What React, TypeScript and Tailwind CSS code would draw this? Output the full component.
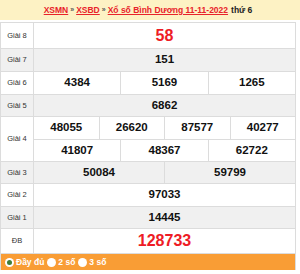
import React from 'react';

type Row = { label: string; nums: string[][]; big?: boolean; gray?: boolean; h: string[] };

const rows: Row[] = [
  { label: 'Giải 8', nums: [['58']], big: true, h: ['h-[25px]'] },
  { label: 'Giải 7', nums: [['151']], gray: true, h: ['h-[22px]'] },
  { label: 'Giải 6', nums: [['4384', '5169', '1265']], h: ['h-[22px]'] },
  { label: 'Giải 5', nums: [['6862']], gray: true, h: ['h-[21px]'] },
  {
    label: 'Giải 4',
    nums: [
      ['48055', '26620', '87577', '40277'],
      ['41807', '48367', '62722'],
    ],
    h: ['h-[22px]', 'h-[22px]'],
  },
  { label: 'Giải 3', nums: [['50084', '59799']], gray: true, h: ['h-[21px]'] },
  { label: 'Giải 2', nums: [['97033']], h: ['h-[22px]'] },
  { label: 'Giải 1', nums: [['14445']], gray: true, h: ['h-[21px]'] },
  { label: 'ĐB', nums: [['128733']], big: true, h: ['h-[24px]'] },
];

function Radio({ checked, label }: { checked?: boolean; label: string }) {
  return (
    <div className="flex items-center gap-[2px]">
      <span className="w-[9px] h-[9px] rounded-full bg-white flex items-center justify-center">
        {checked && <span className="w-[5px] h-[5px] rounded-full bg-[#3f7d3a]" />}
      </span>
      <span className="text-[8.5px] font-bold text-white">{label}</span>
    </div>
  );
}

export default function App() {
  return (
    <div className="w-[300px] h-[274px] bg-white font-['Liberation_Sans',Arial,sans-serif]">
      <div className="h-[20px] bg-[#fdf2c4] flex items-center justify-center text-[8.5px] font-bold pr-[4px]">
        <a className="text-[#e8232a] underline">XSMN</a>
        <span className="text-[#555] mx-[2px] text-[7px]">»</span>
        <a className="text-[#e8232a] underline">XSBD</a>
        <span className="text-[#555] mx-[2px] text-[7px]">»</span>
        <a className="text-[#e8232a] underline">Xổ số Bình Dương 11-11-2022</a>
        <span className="text-[#222] ml-[3px]">thứ 6</span>
      </div>
      <div className="mt-[2px] w-[296px] border-t border-l border-r border-[#dcdcdc]">
        {rows.map((r) => (
          <div
            key={r.label}
            className={`flex border-b border-[#dcdcdc] ${r.gray ? 'bg-[#f0f0f0]' : 'bg-white'}`}
          >
            <div className="w-[33px] shrink-0 border-r border-[#dcdcdc] flex items-center justify-center text-[7.5px] text-[#333]">
              {r.label}
            </div>
            <div className="flex-1 flex flex-col">
              {r.nums.map((line, i) => (
                <div
                  key={i}
                  className={`flex ${i > 0 ? 'border-t border-[#dcdcdc]' : ''} ${r.h[i]}`}
                >
                  {line.map((n, j) => (
                    <div
                      key={n}
                      className={`flex-1 flex items-center justify-center font-bold ${
                        j > 0 ? 'border-l border-[#dcdcdc]' : ''
                      } ${r.big ? 'text-[16px] text-[#ee1c25]' : 'text-[11.5px] text-[#111]'}`}
                    >
                      {n}
                    </div>
                  ))}
                </div>
              ))}
            </div>
          </div>
        ))}
        <div className="h-[16px] bg-[#f99d35] flex items-center gap-[3px] pl-[4px]">
          <Radio checked label="Đầy đủ" />
          <Radio label="2 số" />
          <Radio label="3 số" />
        </div>
      </div>
    </div>
  );
}
